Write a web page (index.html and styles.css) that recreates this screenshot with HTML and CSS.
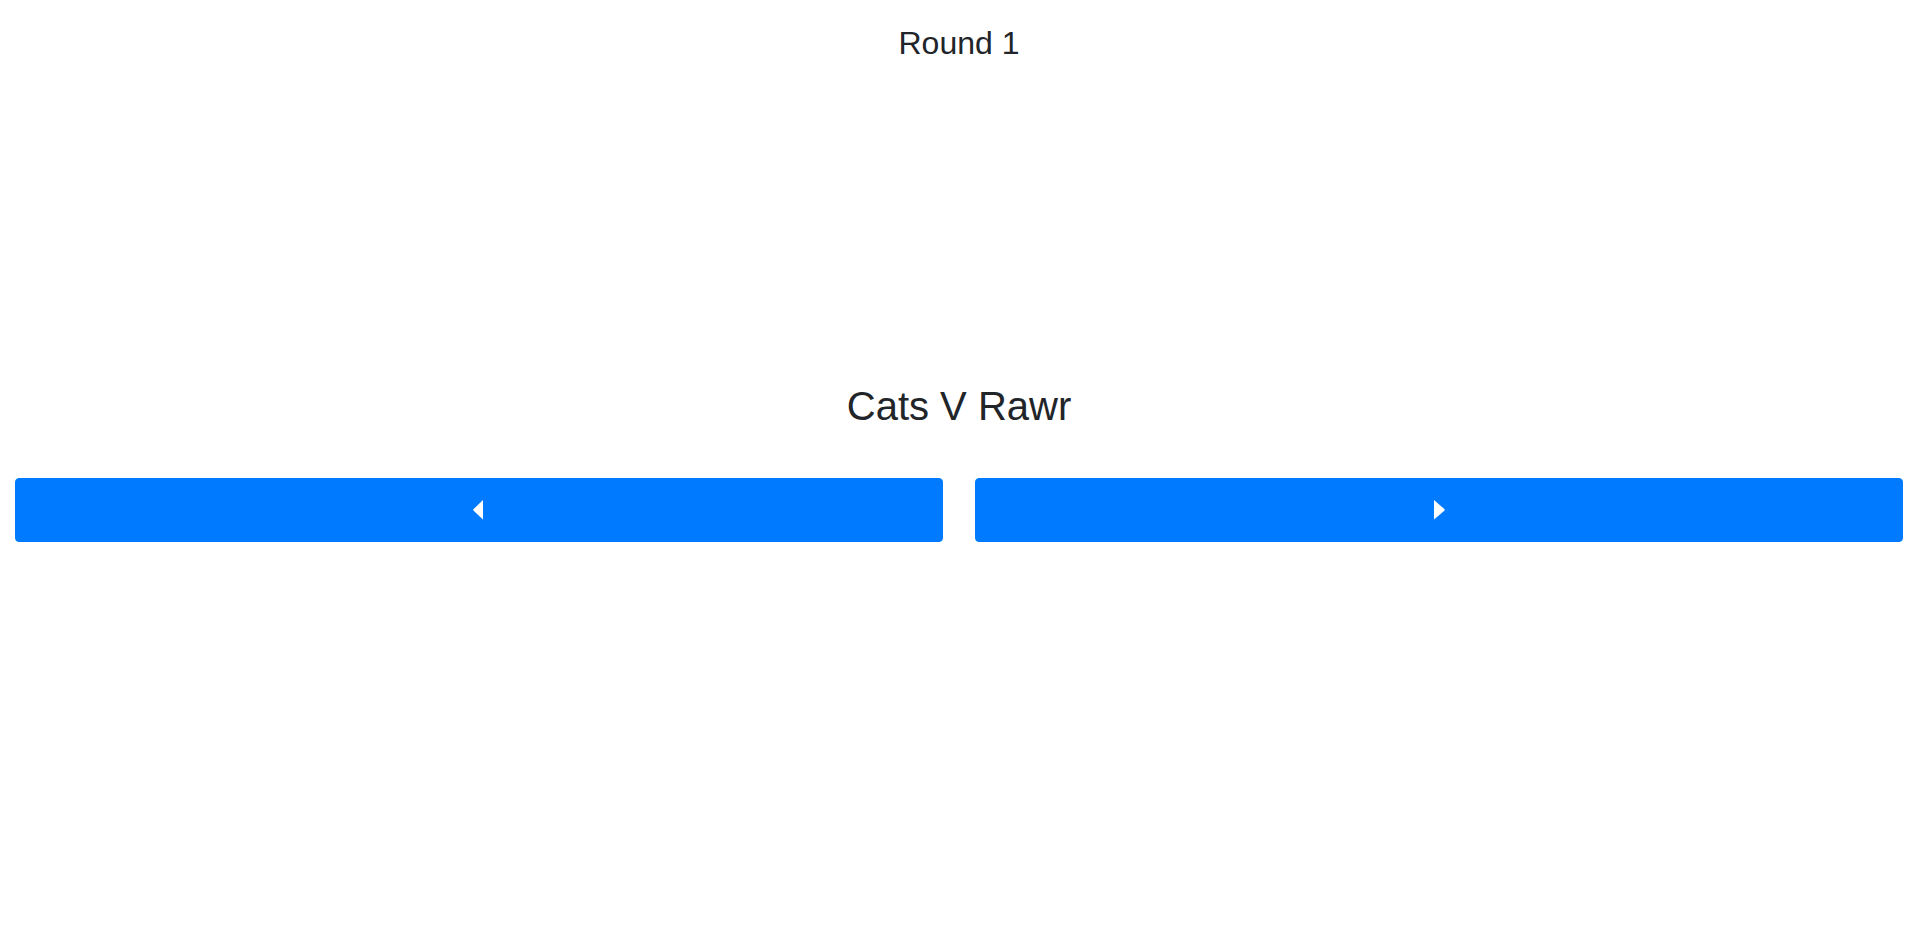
FILE: index.html
```html
<!DOCTYPE html>
<html lang="en">
<head>
<meta charset="utf-8">
<title>Round 1</title>
<link rel="stylesheet" href="styles.css">
</head>
<body>
<div class="page">
  <h2 class="round">Round 1</h2>
  <section class="matchup">
    <h1 class="title">Cats V Rawr</h1>
    <div class="choices">
      <button class="choice" type="button" aria-label="Previous">
        <svg class="caret caret-left" width="10" height="20" viewBox="0 0 10 20"><polygon points="10,0 10,19.6 0.4,10.4 0.4,9.2" fill="#fff"/></svg>
      </button>
      <button class="choice" type="button" aria-label="Next">
        <svg class="caret caret-right" width="11" height="20" viewBox="0 0 11 20"><polygon points="0,0 0,19.6 10.6,10.4 10.6,9.2" fill="#fff"/></svg>
      </button>
    </div>
  </section>
</div>
</body>
</html>
```
FILE: styles.css
```css
* { box-sizing: border-box; }
html, body { margin: 0; padding: 0; background: #fff; }
body {
  font-family: "Liberation Sans", Arial, sans-serif;
  color: #212529;
}
.page {
  padding: 24px 14px 0 15px;
}
.round {
  margin: 0;
  font-size: 32px;
  font-weight: 400;
  line-height: 1.2;
  text-align: center;
}
.matchup {
  margin-top: 320px;
}
.title {
  margin: 0 0 48px;
  font-size: 40px;
  font-weight: 400;
  line-height: 1.2;
  text-align: center;
}
.choices {
  display: grid;
  grid-template-columns: 1fr 1fr;
  column-gap: 32px;
}
.choice {
  height: 64px;
  border: 1px solid #007bff;
  border-radius: 4px;
  background: #007bff;
  display: flex;
  align-items: center;
  justify-content: center;
  padding: 0;
  cursor: pointer;
}
.caret { display: block; }
.caret-left { margin-right: 2px; }
.caret-right { margin-left: 1px; }
```
